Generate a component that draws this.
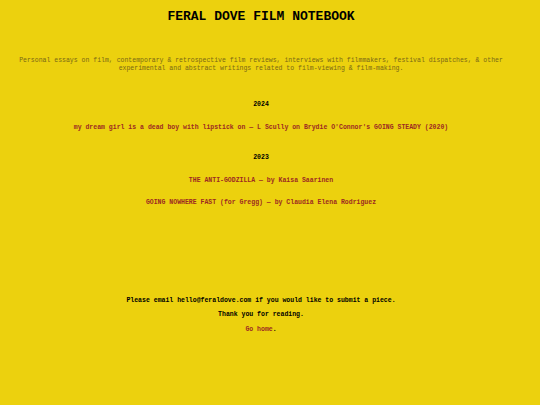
export default function App() {
  return (
    <div className="min-h-[405px] w-full bg-[#ecd10e] font-['Courier_New','Liberation_Mono',monospace] text-black">
      <div className="w-[522px] text-center">
        {/* Header */}
        <h1 className="pt-[9px] text-[13px] leading-[16px] font-bold">FERAL DOVE FILM NOTEBOOK</h1>
        <p className="mt-[32px] px-[6px] text-[6.5px] leading-[8px] text-[#7a6816]">
          Personal essays on film, contemporary &amp; retrospective film reviews, interviews with filmmakers, festival
          dispatches, &amp; other experimental and abstract writings related to film-viewing &amp; film-making.
        </p>

        {/* Entries */}
        <div className="text-[6.5px] leading-[8px] font-bold">
          <h2 className="mt-[28px]">2024</h2>
          <a href="#" className="mt-[15px] block text-[#9c2a22]">
            my dream girl is a dead boy with lipstick on — L Scully on Brydie O'Connor's GOING STEADY (2020)
          </a>
          <h2 className="mt-[22px]">2023</h2>
          <a href="#" className="mt-[15px] block text-[#9c2a22]">
            THE ANTI-GODZILLA — by Kaisa Saarinen
          </a>
          <a href="#" className="mt-[14px] block text-[#9c2a22]">
            GOING NOWHERE FAST (for Gregg) — by Claudia Elena Rodriguez
          </a>
        </div>

        {/* Footer */}
        <div className="mt-[90px] text-[6.5px] leading-[8px] font-bold">
          <p>Please email hello@feraldove.com if you would like to submit a piece.</p>
          <p className="mt-[6px]">Thank you for reading.</p>
          <p className="mt-[7px]">
            <a href="#" className="text-[#9c2a22]">Go home</a>.
          </p>
        </div>
      </div>
    </div>
  )
}
